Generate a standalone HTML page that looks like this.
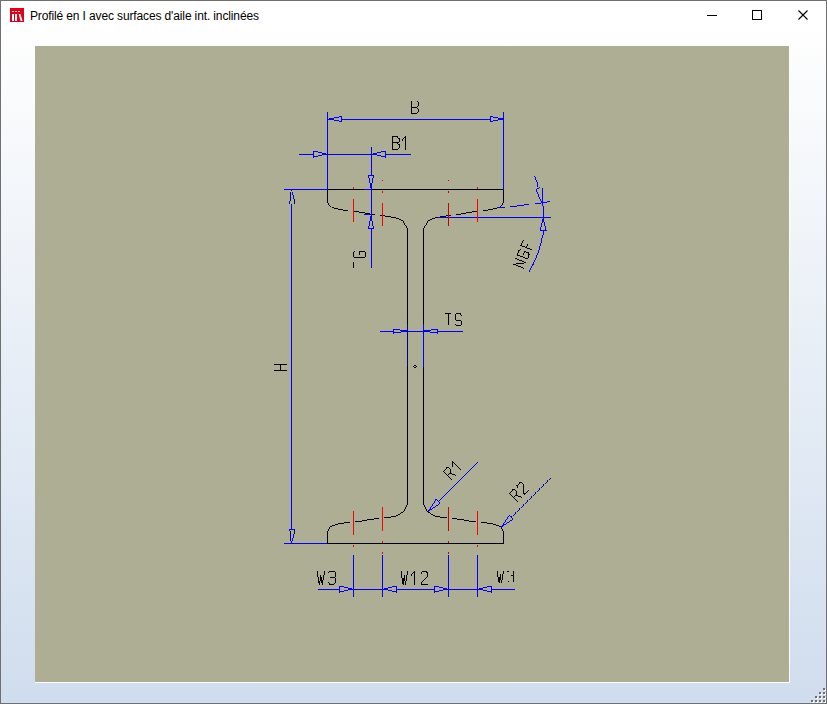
<!DOCTYPE html>
<html><head><meta charset="utf-8">
<style>
html,body{margin:0;padding:0;width:827px;height:704px;overflow:hidden;background:#fff;}
#win{position:absolute;left:0;top:0;width:825px;height:702px;border:1px solid #707070;background:#fff;}
#title{position:absolute;left:0;top:0;width:825px;height:31px;background:#fff;}
#icon{position:absolute;left:9px;top:7px;width:14px;height:14px;}
#icon svg{position:static;display:block;}
#ttext{position:absolute;left:29px;letter-spacing:-0.13px;top:8px;font-family:"Liberation Sans",sans-serif;font-size:12px;color:#000;white-space:nowrap;line-height:15px;}
#client{position:absolute;left:0;top:31px;width:825px;height:671px;background:linear-gradient(#fefefe,#d0ddee);}
#canvas{position:absolute;left:34px;top:14px;width:754px;height:636px;background:#aeae94;border-right:1px solid #fff;border-bottom:1px solid #fff;}
svg{position:absolute;left:0;top:0;}
.g i{position:absolute;width:2px;height:2px;background:#6b6b6b;box-shadow:1px 1px 0 #fff;}

</style></head><body>
<div id="win">
 <div id="title">
  <div id="icon"><svg width="14" height="14" viewBox="0 0 14 14" shape-rendering="crispEdges"><rect width="14" height="14" fill="#df001a"/><rect x="2" y="3" width="2" height="1" fill="#f8c0c8"/><rect x="2" y="6" width="2" height="7" fill="#fff"/><rect x="5" y="3" width="2" height="1" fill="#f8c0c8"/><rect x="5" y="6" width="2" height="7" fill="#fff"/><rect x="8" y="3" width="2" height="1" fill="#f8c0c8"/><g shape-rendering="auto"><polygon points="8.6,6 10.4,6 12.6,13 10.6,13" fill="#fff"/></g><rect x="1.6" y="4" width="0.6" height="2" fill="#f4a0aa"/></svg></div>
  <div id="ttext">Profilé en I avec surfaces d'aile int. inclinées</div>
  <div style="position:absolute;left:706px;top:14px;width:10px;height:1px;background:#000"></div>
  <div style="position:absolute;left:751px;top:9px;width:8px;height:8px;border:1px solid #000"></div>
  <svg style="position:absolute;left:797px;top:9px" width="10" height="10" viewBox="0 0 10 10"><path d="M0.5,0.5L9.5,9.5M9.5,0.5L0.5,9.5" stroke="#000" stroke-width="1.1" fill="none"/></svg>
 </div>
 <div id="client">
  <div id="canvas"></div>
 </div>
 <div class="g"><i style="left:822px;top:687px"></i><i style="left:822px;top:691px"></i><i style="left:818px;top:691px"></i><i style="left:822px;top:695px"></i><i style="left:818px;top:695px"></i><i style="left:814px;top:695px"></i><i style="left:822px;top:699px"></i><i style="left:818px;top:699px"></i><i style="left:814px;top:699px"></i><i style="left:810px;top:699px"></i></div>
</div>
<svg width="827" height="704" viewBox="0 0 827 704" shape-rendering="crispEdges"><path fill="#000000" d="M411 101h1v1h-1zM417 101h1v1h-1zM411 102h1v1h-1zM418 102h1v1h-1zM411 103h1v1h-1zM418 103h1v1h-1zM411 104h1v1h-1zM418 104h1v1h-1zM411 105h1v1h-1zM418 105h1v1h-1zM411 106h1v1h-1zM417 106h1v1h-1zM411 107h6v1h-6zM411 108h1v1h-1zM417 108h1v1h-1zM411 109h1v1h-1zM418 109h1v1h-1zM411 110h1v1h-1zM418 110h1v1h-1zM411 111h1v1h-1zM418 111h1v1h-1zM411 112h1v1h-1zM417 112h1v1h-1zM411 113h6v1h-6zM392 136h6v1h-6zM405 136h1v1h-1zM392 137h1v1h-1zM397 137h1v1h-1zM404 137h2v1h-2zM392 138h1v1h-1zM398 138h2v1h-2zM403 138h1v1h-1zM405 138h1v1h-1zM392 139h1v1h-1zM399 139h1v1h-1zM402 139h1v1h-1zM405 139h1v1h-1zM392 140h1v1h-1zM399 140h1v1h-1zM402 140h1v1h-1zM405 140h1v1h-1zM392 141h1v1h-1zM399 141h1v1h-1zM405 141h1v1h-1zM392 142h7v1h-7zM405 142h1v1h-1zM392 143h1v1h-1zM397 143h1v1h-1zM405 143h1v1h-1zM392 144h1v1h-1zM398 144h2v1h-2zM405 144h1v1h-1zM392 145h1v1h-1zM399 145h1v1h-1zM405 145h1v1h-1zM392 146h1v1h-1zM399 146h1v1h-1zM405 146h1v1h-1zM392 147h1v1h-1zM399 147h1v1h-1zM405 147h1v1h-1zM392 148h1v1h-1zM398 148h1v1h-1zM405 148h1v1h-1zM392 149h6v1h-6zM405 149h1v1h-1zM328 189h36v1h-36zM372 189h131v1h-131zM327 190h1v1h-1zM503 190h1v1h-1zM327 191h1v1h-1zM503 191h1v1h-1zM327 192h1v1h-1zM503 192h1v1h-1zM327 193h1v1h-1zM503 193h1v1h-1zM327 194h1v1h-1zM503 194h1v1h-1zM327 195h1v1h-1zM503 195h1v1h-1zM327 196h1v1h-1zM503 196h1v1h-1zM327 197h1v1h-1zM503 197h1v1h-1zM327 198h1v1h-1zM503 198h1v1h-1zM327 199h1v1h-1zM503 199h1v1h-1zM327 200h1v1h-1zM503 200h1v1h-1zM327 201h1v1h-1zM503 201h1v1h-1zM327 202h1v1h-1zM503 202h1v1h-1zM328 203h1v1h-1zM502 203h1v1h-1zM328 204h1v1h-1zM502 204h1v1h-1zM329 205h1v1h-1zM501 205h1v1h-1zM330 206h1v1h-1zM500 206h1v1h-1zM332 207h2v1h-2zM334 208h4v1h-4zM493 208h4v1h-4zM338 209h5v1h-5zM488 209h5v1h-5zM343 210h5v1h-5zM483 210h5v1h-5zM354 211h5v1h-5zM472 211h5v1h-5zM359 212h6v1h-6zM466 212h6v1h-6zM365 213h5v1h-5zM461 213h5v1h-5zM372 214h3v1h-3zM456 214h5v1h-5zM380 215h2v1h-2zM383 215h2v1h-2zM446 215h2v1h-2zM449 215h2v1h-2zM385 216h6v1h-6zM440 216h6v1h-6zM391 217h5v1h-5zM435 217h3v1h-3zM396 218h3v1h-3zM432 218h3v1h-3zM399 219h2v1h-2zM430 219h2v1h-2zM401 220h2v1h-2zM428 220h2v1h-2zM403 221h1v1h-1zM427 221h1v1h-1zM403 222h1v1h-1zM427 222h1v1h-1zM404 223h1v1h-1zM426 223h1v1h-1zM404 224h1v1h-1zM426 224h1v1h-1zM405 225h1v1h-1zM425 225h1v1h-1zM406 226h1v1h-1zM424 226h1v1h-1zM406 227h1v1h-1zM424 227h1v1h-1zM407 228h1v1h-1zM423 228h1v1h-1zM407 229h1v1h-1zM423 229h1v1h-1zM407 230h1v1h-1zM423 230h1v1h-1zM407 231h1v1h-1zM423 231h1v1h-1zM407 232h1v1h-1zM423 232h1v1h-1zM407 233h1v1h-1zM423 233h1v1h-1zM407 234h1v1h-1zM423 234h1v1h-1zM407 235h1v1h-1zM423 235h1v1h-1zM407 236h1v1h-1zM423 236h1v1h-1zM407 237h1v1h-1zM423 237h1v1h-1zM407 238h1v1h-1zM423 238h1v1h-1zM407 239h1v1h-1zM423 239h1v1h-1zM407 240h1v1h-1zM423 240h1v1h-1zM523 240h1v1h-1zM407 241h1v1h-1zM423 241h1v1h-1zM522 241h1v1h-1zM407 242h1v1h-1zM423 242h1v1h-1zM522 242h1v1h-1zM407 243h1v1h-1zM423 243h1v1h-1zM521 243h1v1h-1zM407 244h1v1h-1zM423 244h1v1h-1zM521 244h1v1h-1zM527 244h1v1h-1zM407 245h1v1h-1zM423 245h1v1h-1zM520 245h2v1h-2zM527 245h1v1h-1zM407 246h1v1h-1zM423 246h1v1h-1zM522 246h3v1h-3zM526 246h1v1h-1zM407 247h1v1h-1zM423 247h1v1h-1zM525 247h2v1h-2zM407 248h1v1h-1zM423 248h1v1h-1zM527 248h3v1h-3zM407 249h1v1h-1zM423 249h1v1h-1zM520 249h1v1h-1zM530 249h2v1h-2zM407 250h1v1h-1zM423 250h1v1h-1zM518 250h2v1h-2zM354 251h1v1h-1zM359 251h6v1h-6zM407 251h1v1h-1zM423 251h1v1h-1zM518 251h1v1h-1zM524 251h2v1h-2zM353 252h1v1h-1zM359 252h1v1h-1zM365 252h1v1h-1zM407 252h1v1h-1zM423 252h1v1h-1zM518 252h1v1h-1zM524 252h1v1h-1zM526 252h3v1h-3zM353 253h1v1h-1zM359 253h1v1h-1zM365 253h1v1h-1zM407 253h1v1h-1zM423 253h1v1h-1zM517 253h1v1h-1zM523 253h1v1h-1zM528 253h1v1h-1zM353 254h1v1h-1zM359 254h1v1h-1zM365 254h1v1h-1zM407 254h1v1h-1zM423 254h1v1h-1zM517 254h1v1h-1zM523 254h1v1h-1zM528 254h2v1h-2zM353 255h1v1h-1zM365 255h1v1h-1zM407 255h1v1h-1zM423 255h1v1h-1zM517 255h3v1h-3zM528 255h1v1h-1zM353 256h1v1h-1zM365 256h1v1h-1zM407 256h1v1h-1zM423 256h1v1h-1zM520 256h3v1h-3zM528 256h1v1h-1zM354 257h11v1h-11zM407 257h1v1h-1zM423 257h1v1h-1zM523 257h2v1h-2zM528 257h1v1h-1zM407 258h1v1h-1zM423 258h1v1h-1zM515 258h2v1h-2zM525 258h3v1h-3zM407 259h1v1h-1zM423 259h1v1h-1zM517 259h2v1h-2zM407 260h1v1h-1zM423 260h1v1h-1zM519 260h3v1h-3zM407 261h1v1h-1zM423 261h1v1h-1zM522 261h2v1h-2zM353 262h1v1h-1zM407 262h1v1h-1zM423 262h1v1h-1zM524 262h2v1h-2zM353 263h1v1h-1zM407 263h1v1h-1zM423 263h1v1h-1zM516 263h8v1h-8zM353 264h1v1h-1zM407 264h1v1h-1zM423 264h1v1h-1zM513 264h3v1h-3zM353 265h1v1h-1zM407 265h1v1h-1zM423 265h1v1h-1zM516 265h2v1h-2zM353 266h1v1h-1zM407 266h1v1h-1zM423 266h1v1h-1zM518 266h3v1h-3zM353 267h1v1h-1zM407 267h1v1h-1zM423 267h1v1h-1zM521 267h2v1h-2zM407 268h1v1h-1zM423 268h1v1h-1zM523 268h1v1h-1zM407 269h1v1h-1zM423 269h1v1h-1zM407 270h1v1h-1zM423 270h1v1h-1zM407 271h1v1h-1zM423 271h1v1h-1zM407 272h1v1h-1zM423 272h1v1h-1zM407 273h1v1h-1zM423 273h1v1h-1zM407 274h1v1h-1zM423 274h1v1h-1zM407 275h1v1h-1zM423 275h1v1h-1zM407 276h1v1h-1zM423 276h1v1h-1zM407 277h1v1h-1zM423 277h1v1h-1zM407 278h1v1h-1zM423 278h1v1h-1zM407 279h1v1h-1zM423 279h1v1h-1zM407 280h1v1h-1zM423 280h1v1h-1zM407 281h1v1h-1zM423 281h1v1h-1zM407 282h1v1h-1zM423 282h1v1h-1zM407 283h1v1h-1zM423 283h1v1h-1zM407 284h1v1h-1zM423 284h1v1h-1zM407 285h1v1h-1zM423 285h1v1h-1zM407 286h1v1h-1zM423 286h1v1h-1zM407 287h1v1h-1zM423 287h1v1h-1zM407 288h1v1h-1zM423 288h1v1h-1zM407 289h1v1h-1zM423 289h1v1h-1zM407 290h1v1h-1zM423 290h1v1h-1zM407 291h1v1h-1zM423 291h1v1h-1zM407 292h1v1h-1zM423 292h1v1h-1zM407 293h1v1h-1zM423 293h1v1h-1zM407 294h1v1h-1zM423 294h1v1h-1zM407 295h1v1h-1zM423 295h1v1h-1zM407 296h1v1h-1zM423 296h1v1h-1zM407 297h1v1h-1zM423 297h1v1h-1zM407 298h1v1h-1zM423 298h1v1h-1zM407 299h1v1h-1zM423 299h1v1h-1zM407 300h1v1h-1zM423 300h1v1h-1zM407 301h1v1h-1zM423 301h1v1h-1zM407 302h1v1h-1zM423 302h1v1h-1zM407 303h1v1h-1zM423 303h1v1h-1zM407 304h1v1h-1zM423 304h1v1h-1zM407 305h1v1h-1zM423 305h1v1h-1zM407 306h1v1h-1zM423 306h1v1h-1zM407 307h1v1h-1zM423 307h1v1h-1zM407 308h1v1h-1zM423 308h1v1h-1zM407 309h1v1h-1zM423 309h1v1h-1zM407 310h1v1h-1zM423 310h1v1h-1zM407 311h1v1h-1zM423 311h1v1h-1zM407 312h1v1h-1zM423 312h1v1h-1zM407 313h1v1h-1zM423 313h1v1h-1zM445 313h6v1h-6zM456 313h5v1h-5zM407 314h1v1h-1zM423 314h1v1h-1zM448 314h1v1h-1zM455 314h1v1h-1zM460 314h1v1h-1zM407 315h1v1h-1zM423 315h1v1h-1zM448 315h1v1h-1zM455 315h1v1h-1zM461 315h1v1h-1zM407 316h1v1h-1zM423 316h1v1h-1zM448 316h1v1h-1zM455 316h1v1h-1zM407 317h1v1h-1zM423 317h1v1h-1zM448 317h1v1h-1zM455 317h1v1h-1zM407 318h1v1h-1zM423 318h1v1h-1zM448 318h1v1h-1zM455 318h1v1h-1zM407 319h1v1h-1zM423 319h1v1h-1zM448 319h1v1h-1zM455 319h1v1h-1zM407 320h1v1h-1zM423 320h1v1h-1zM448 320h1v1h-1zM456 320h5v1h-5zM407 321h1v1h-1zM423 321h1v1h-1zM448 321h1v1h-1zM461 321h1v1h-1zM407 322h1v1h-1zM423 322h1v1h-1zM448 322h1v1h-1zM461 322h1v1h-1zM407 323h1v1h-1zM423 323h1v1h-1zM448 323h1v1h-1zM461 323h1v1h-1zM448 324h1v1h-1zM455 324h1v1h-1zM461 324h1v1h-1zM456 325h5v1h-5zM274 364h13v1h-13zM280 365h1v1h-1zM414 365h2v1h-2zM280 366h1v1h-1zM413 366h1v1h-1zM416 366h1v1h-1zM280 367h1v1h-1zM407 367h1v1h-1zM414 367h2v1h-2zM423 367h1v1h-1zM280 368h1v1h-1zM407 368h1v1h-1zM423 368h1v1h-1zM280 369h1v1h-1zM407 369h1v1h-1zM423 369h1v1h-1zM274 370h13v1h-13zM407 370h1v1h-1zM423 370h1v1h-1zM407 371h1v1h-1zM423 371h1v1h-1zM407 372h1v1h-1zM423 372h1v1h-1zM407 373h1v1h-1zM423 373h1v1h-1zM407 374h1v1h-1zM423 374h1v1h-1zM407 375h1v1h-1zM423 375h1v1h-1zM407 376h1v1h-1zM423 376h1v1h-1zM407 377h1v1h-1zM423 377h1v1h-1zM407 378h1v1h-1zM423 378h1v1h-1zM407 379h1v1h-1zM423 379h1v1h-1zM407 380h1v1h-1zM423 380h1v1h-1zM407 381h1v1h-1zM423 381h1v1h-1zM407 382h1v1h-1zM423 382h1v1h-1zM407 383h1v1h-1zM423 383h1v1h-1zM407 384h1v1h-1zM423 384h1v1h-1zM407 385h1v1h-1zM423 385h1v1h-1zM407 386h1v1h-1zM423 386h1v1h-1zM407 387h1v1h-1zM423 387h1v1h-1zM407 388h1v1h-1zM423 388h1v1h-1zM407 389h1v1h-1zM423 389h1v1h-1zM407 390h1v1h-1zM423 390h1v1h-1zM407 391h1v1h-1zM423 391h1v1h-1zM407 392h1v1h-1zM423 392h1v1h-1zM407 393h1v1h-1zM423 393h1v1h-1zM407 394h1v1h-1zM423 394h1v1h-1zM407 395h1v1h-1zM423 395h1v1h-1zM407 396h1v1h-1zM423 396h1v1h-1zM407 397h1v1h-1zM423 397h1v1h-1zM407 398h1v1h-1zM423 398h1v1h-1zM407 399h1v1h-1zM423 399h1v1h-1zM407 400h1v1h-1zM423 400h1v1h-1zM407 401h1v1h-1zM423 401h1v1h-1zM407 402h1v1h-1zM423 402h1v1h-1zM407 403h1v1h-1zM423 403h1v1h-1zM407 404h1v1h-1zM423 404h1v1h-1zM407 405h1v1h-1zM423 405h1v1h-1zM407 406h1v1h-1zM423 406h1v1h-1zM407 407h1v1h-1zM423 407h1v1h-1zM407 408h1v1h-1zM423 408h1v1h-1zM407 409h1v1h-1zM423 409h1v1h-1zM407 410h1v1h-1zM423 410h1v1h-1zM407 411h1v1h-1zM423 411h1v1h-1zM407 412h1v1h-1zM423 412h1v1h-1zM407 413h1v1h-1zM423 413h1v1h-1zM407 414h1v1h-1zM423 414h1v1h-1zM407 415h1v1h-1zM423 415h1v1h-1zM407 416h1v1h-1zM423 416h1v1h-1zM407 417h1v1h-1zM423 417h1v1h-1zM407 418h1v1h-1zM423 418h1v1h-1zM407 419h1v1h-1zM423 419h1v1h-1zM407 420h1v1h-1zM423 420h1v1h-1zM407 421h1v1h-1zM423 421h1v1h-1zM407 422h1v1h-1zM423 422h1v1h-1zM407 423h1v1h-1zM423 423h1v1h-1zM407 424h1v1h-1zM423 424h1v1h-1zM407 425h1v1h-1zM423 425h1v1h-1zM407 426h1v1h-1zM423 426h1v1h-1zM407 427h1v1h-1zM423 427h1v1h-1zM407 428h1v1h-1zM423 428h1v1h-1zM407 429h1v1h-1zM423 429h1v1h-1zM407 430h1v1h-1zM423 430h1v1h-1zM407 431h1v1h-1zM423 431h1v1h-1zM407 432h1v1h-1zM423 432h1v1h-1zM407 433h1v1h-1zM423 433h1v1h-1zM407 434h1v1h-1zM423 434h1v1h-1zM407 435h1v1h-1zM423 435h1v1h-1zM407 436h1v1h-1zM423 436h1v1h-1zM407 437h1v1h-1zM423 437h1v1h-1zM407 438h1v1h-1zM423 438h1v1h-1zM407 439h1v1h-1zM423 439h1v1h-1zM407 440h1v1h-1zM423 440h1v1h-1zM407 441h1v1h-1zM423 441h1v1h-1zM407 442h1v1h-1zM423 442h1v1h-1zM407 443h1v1h-1zM423 443h1v1h-1zM407 444h1v1h-1zM423 444h1v1h-1zM407 445h1v1h-1zM423 445h1v1h-1zM407 446h1v1h-1zM423 446h1v1h-1zM407 447h1v1h-1zM423 447h1v1h-1zM407 448h1v1h-1zM423 448h1v1h-1zM407 449h1v1h-1zM423 449h1v1h-1zM407 450h1v1h-1zM423 450h1v1h-1zM407 451h1v1h-1zM423 451h1v1h-1zM407 452h1v1h-1zM423 452h1v1h-1zM407 453h1v1h-1zM423 453h1v1h-1zM407 454h1v1h-1zM423 454h1v1h-1zM407 455h1v1h-1zM423 455h1v1h-1zM407 456h1v1h-1zM423 456h1v1h-1zM407 457h1v1h-1zM423 457h1v1h-1zM407 458h1v1h-1zM423 458h1v1h-1zM407 459h1v1h-1zM423 459h1v1h-1zM407 460h1v1h-1zM423 460h1v1h-1zM407 461h1v1h-1zM423 461h1v1h-1zM452 461h1v1h-1zM407 462h1v1h-1zM423 462h1v1h-1zM452 462h2v1h-2zM407 463h1v1h-1zM423 463h1v1h-1zM452 463h1v1h-1zM454 463h1v1h-1zM407 464h1v1h-1zM423 464h1v1h-1zM452 464h1v1h-1zM455 464h1v1h-1zM407 465h1v1h-1zM423 465h1v1h-1zM452 465h1v1h-1zM456 465h1v1h-1zM407 466h1v1h-1zM423 466h1v1h-1zM452 466h1v1h-1zM457 466h1v1h-1zM407 467h1v1h-1zM423 467h1v1h-1zM446 467h3v1h-3zM458 467h1v1h-1zM407 468h1v1h-1zM423 468h1v1h-1zM446 468h1v1h-1zM449 468h1v1h-1zM459 468h1v1h-1zM407 469h1v1h-1zM423 469h1v1h-1zM445 469h1v1h-1zM450 469h1v1h-1zM460 469h1v1h-1zM407 470h1v1h-1zM423 470h1v1h-1zM444 470h1v1h-1zM450 470h1v1h-1zM407 471h1v1h-1zM423 471h1v1h-1zM443 471h1v1h-1zM450 471h1v1h-1zM407 472h1v1h-1zM423 472h1v1h-1zM444 472h1v1h-1zM450 472h1v1h-1zM407 473h1v1h-1zM423 473h1v1h-1zM445 473h1v1h-1zM449 473h3v1h-3zM407 474h1v1h-1zM423 474h1v1h-1zM446 474h1v1h-1zM448 474h1v1h-1zM452 474h3v1h-3zM407 475h1v1h-1zM423 475h1v1h-1zM447 475h1v1h-1zM455 475h1v1h-1zM407 476h1v1h-1zM423 476h1v1h-1zM448 476h1v1h-1zM407 477h1v1h-1zM423 477h1v1h-1zM449 477h1v1h-1zM407 478h1v1h-1zM423 478h1v1h-1zM450 478h1v1h-1zM407 479h1v1h-1zM423 479h1v1h-1zM451 479h1v1h-1zM407 480h1v1h-1zM423 480h1v1h-1zM407 481h1v1h-1zM423 481h1v1h-1zM407 482h1v1h-1zM423 482h1v1h-1zM519 482h3v1h-3zM407 483h1v1h-1zM423 483h1v1h-1zM519 483h1v1h-1zM522 483h1v1h-1zM407 484h1v1h-1zM423 484h1v1h-1zM518 484h1v1h-1zM523 484h1v1h-1zM407 485h1v1h-1zM423 485h1v1h-1zM516 485h2v1h-2zM523 485h1v1h-1zM407 486h1v1h-1zM423 486h1v1h-1zM517 486h1v1h-1zM523 486h1v1h-1zM407 487h1v1h-1zM423 487h1v1h-1zM517 487h1v1h-1zM523 487h1v1h-1zM407 488h1v1h-1zM423 488h1v1h-1zM523 488h1v1h-1zM407 489h1v1h-1zM423 489h1v1h-1zM512 489h3v1h-3zM523 489h1v1h-1zM407 490h1v1h-1zM423 490h1v1h-1zM512 490h1v1h-1zM515 490h1v1h-1zM523 490h1v1h-1zM528 490h1v1h-1zM407 491h1v1h-1zM423 491h1v1h-1zM511 491h1v1h-1zM516 491h1v1h-1zM523 491h1v1h-1zM527 491h1v1h-1zM407 492h1v1h-1zM423 492h1v1h-1zM510 492h1v1h-1zM516 492h1v1h-1zM523 492h1v1h-1zM526 492h1v1h-1zM407 493h1v1h-1zM423 493h1v1h-1zM509 493h1v1h-1zM516 493h1v1h-1zM523 493h3v1h-3zM407 494h1v1h-1zM423 494h1v1h-1zM510 494h1v1h-1zM516 494h1v1h-1zM524 494h1v1h-1zM407 495h1v1h-1zM423 495h1v1h-1zM511 495h1v1h-1zM515 495h3v1h-3zM407 496h1v1h-1zM423 496h1v1h-1zM512 496h1v1h-1zM514 496h1v1h-1zM518 496h3v1h-3zM407 497h1v1h-1zM423 497h1v1h-1zM513 497h1v1h-1zM521 497h1v1h-1zM407 498h1v1h-1zM423 498h1v1h-1zM514 498h1v1h-1zM407 499h1v1h-1zM423 499h1v1h-1zM515 499h1v1h-1zM407 500h1v1h-1zM423 500h1v1h-1zM516 500h1v1h-1zM407 501h1v1h-1zM423 501h1v1h-1zM517 501h1v1h-1zM407 502h1v1h-1zM423 502h1v1h-1zM407 503h1v1h-1zM423 503h1v1h-1zM407 504h1v1h-1zM423 504h1v1h-1zM406 505h1v1h-1zM424 505h1v1h-1zM406 506h1v1h-1zM424 506h1v1h-1zM405 507h1v1h-1zM425 507h1v1h-1zM405 508h1v1h-1zM425 508h1v1h-1zM404 509h1v1h-1zM426 509h1v1h-1zM404 510h1v1h-1zM426 510h1v1h-1zM403 511h1v1h-1zM427 511h1v1h-1zM401 512h2v1h-2zM428 512h2v1h-2zM400 513h1v1h-1zM430 513h1v1h-1zM398 514h2v1h-2zM431 514h2v1h-2zM396 515h2v1h-2zM433 515h2v1h-2zM391 516h5v1h-5zM435 516h5v1h-5zM384 517h7v1h-7zM440 517h7v1h-7zM374 518h5v1h-5zM452 518h5v1h-5zM367 519h7v1h-7zM457 519h7v1h-7zM362 520h5v1h-5zM464 520h5v1h-5zM355 521h7v1h-7zM469 521h7v1h-7zM344 522h6v1h-6zM481 522h6v1h-6zM338 523h6v1h-6zM487 523h6v1h-6zM335 524h3v1h-3zM493 524h3v1h-3zM332 525h3v1h-3zM496 525h3v1h-3zM330 526h2v1h-2zM499 526h2v1h-2zM329 527h1v1h-1zM329 528h1v1h-1zM501 528h1v1h-1zM328 529h1v1h-1zM502 529h1v1h-1zM328 530h1v1h-1zM502 530h1v1h-1zM327 531h1v1h-1zM503 531h1v1h-1zM327 532h1v1h-1zM503 532h1v1h-1zM327 533h1v1h-1zM503 533h1v1h-1zM327 534h1v1h-1zM503 534h1v1h-1zM327 535h1v1h-1zM503 535h1v1h-1zM327 536h1v1h-1zM503 536h1v1h-1zM327 537h1v1h-1zM503 537h1v1h-1zM327 538h1v1h-1zM503 538h1v1h-1zM327 539h1v1h-1zM503 539h1v1h-1zM327 540h1v1h-1zM503 540h1v1h-1zM327 541h1v1h-1zM503 541h1v1h-1zM327 542h1v1h-1zM503 542h1v1h-1zM327 543h177v1h-177zM317 571h1v1h-1zM324 571h1v1h-1zM329 571h6v1h-6zM401 571h1v1h-1zM407 571h1v1h-1zM414 571h1v1h-1zM422 571h5v1h-5zM497 571h1v1h-1zM503 571h1v1h-1zM507 571h2v1h-2zM513 571h1v1h-1zM317 572h1v1h-1zM324 572h1v1h-1zM328 572h1v1h-1zM335 572h1v1h-1zM401 572h1v1h-1zM407 572h1v1h-1zM413 572h2v1h-2zM421 572h1v1h-1zM426 572h2v1h-2zM497 572h1v1h-1zM503 572h1v1h-1zM513 572h1v1h-1zM317 573h1v1h-1zM324 573h1v1h-1zM335 573h1v1h-1zM401 573h1v1h-1zM407 573h1v1h-1zM412 573h1v1h-1zM414 573h1v1h-1zM421 573h1v1h-1zM427 573h1v1h-1zM497 573h1v1h-1zM503 573h1v1h-1zM513 573h1v1h-1zM317 574h1v1h-1zM324 574h1v1h-1zM335 574h1v1h-1zM401 574h1v1h-1zM407 574h1v1h-1zM411 574h1v1h-1zM414 574h1v1h-1zM427 574h1v1h-1zM497 574h1v1h-1zM500 574h1v1h-1zM502 574h1v1h-1zM513 574h1v1h-1zM317 575h1v1h-1zM320 575h1v1h-1zM323 575h1v1h-1zM335 575h1v1h-1zM401 575h1v1h-1zM404 575h1v1h-1zM406 575h1v1h-1zM411 575h1v1h-1zM414 575h1v1h-1zM427 575h1v1h-1zM497 575h1v1h-1zM500 575h1v1h-1zM502 575h1v1h-1zM511 575h3v1h-3zM317 576h1v1h-1zM320 576h1v1h-1zM323 576h1v1h-1zM335 576h1v1h-1zM401 576h1v1h-1zM404 576h1v1h-1zM406 576h1v1h-1zM414 576h1v1h-1zM427 576h1v1h-1zM497 576h1v1h-1zM500 576h1v1h-1zM502 576h1v1h-1zM513 576h1v1h-1zM318 577h1v1h-1zM320 577h2v1h-2zM323 577h1v1h-1zM330 577h5v1h-5zM401 577h1v1h-1zM404 577h1v1h-1zM406 577h1v1h-1zM414 577h1v1h-1zM426 577h1v1h-1zM498 577h3v1h-3zM502 577h1v1h-1zM513 577h1v1h-1zM318 578h1v1h-1zM320 578h2v1h-2zM323 578h1v1h-1zM335 578h1v1h-1zM402 578h3v1h-3zM406 578h1v1h-1zM414 578h1v1h-1zM425 578h1v1h-1zM498 578h3v1h-3zM502 578h1v1h-1zM513 578h1v1h-1zM318 579h1v1h-1zM320 579h2v1h-2zM323 579h1v1h-1zM335 579h1v1h-1zM402 579h3v1h-3zM406 579h1v1h-1zM414 579h1v1h-1zM424 579h1v1h-1zM498 579h3v1h-3zM502 579h1v1h-1zM513 579h1v1h-1zM318 580h1v1h-1zM320 580h3v1h-3zM335 580h1v1h-1zM402 580h3v1h-3zM406 580h1v1h-1zM414 580h1v1h-1zM423 580h1v1h-1zM498 580h2v1h-2zM501 580h1v1h-1zM513 580h1v1h-1zM318 581h2v1h-2zM321 581h2v1h-2zM335 581h1v1h-1zM402 581h2v1h-2zM405 581h1v1h-1zM414 581h1v1h-1zM422 581h1v1h-1zM498 581h2v1h-2zM501 581h1v1h-1zM508 581h1v1h-1zM513 581h1v1h-1zM318 582h2v1h-2zM321 582h2v1h-2zM328 582h1v1h-1zM335 582h1v1h-1zM402 582h2v1h-2zM405 582h1v1h-1zM414 582h1v1h-1zM421 582h1v1h-1zM499 582h1v1h-1zM501 582h1v1h-1zM319 583h1v1h-1zM322 583h1v1h-1zM329 583h1v1h-1zM334 583h1v1h-1zM402 583h2v1h-2zM405 583h1v1h-1zM414 583h1v1h-1zM421 583h1v1h-1zM319 584h1v1h-1zM322 584h1v1h-1zM329 584h5v1h-5zM403 584h1v1h-1zM405 584h1v1h-1zM414 584h1v1h-1zM421 584h7v1h-7z"/><path fill="#0000ff" d="M327 112h1v1h-1zM503 112h1v1h-1zM327 113h1v1h-1zM503 113h1v1h-1zM327 114h1v1h-1zM503 114h1v1h-1zM327 115h1v1h-1zM503 115h1v1h-1zM327 116h1v1h-1zM339 116h3v1h-3zM490 116h3v1h-3zM503 116h1v1h-1zM327 117h1v1h-1zM334 117h5v1h-5zM341 117h1v1h-1zM490 117h1v1h-1zM493 117h5v1h-5zM503 117h1v1h-1zM327 118h1v1h-1zM329 118h5v1h-5zM341 118h1v1h-1zM490 118h1v1h-1zM498 118h6v1h-6zM327 119h7v1h-7zM341 119h150v1h-150zM498 119h6v1h-6zM327 120h1v1h-1zM334 120h5v1h-5zM341 120h1v1h-1zM490 120h1v1h-1zM493 120h5v1h-5zM503 120h1v1h-1zM327 121h1v1h-1zM339 121h3v1h-3zM490 121h3v1h-3zM503 121h1v1h-1zM327 122h1v1h-1zM503 122h1v1h-1zM327 123h1v1h-1zM503 123h1v1h-1zM327 124h1v1h-1zM503 124h1v1h-1zM327 125h1v1h-1zM503 125h1v1h-1zM327 126h1v1h-1zM503 126h1v1h-1zM327 127h1v1h-1zM503 127h1v1h-1zM327 128h1v1h-1zM503 128h1v1h-1zM327 129h1v1h-1zM503 129h1v1h-1zM327 130h1v1h-1zM503 130h1v1h-1zM327 131h1v1h-1zM503 131h1v1h-1zM327 132h1v1h-1zM503 132h1v1h-1zM327 133h1v1h-1zM503 133h1v1h-1zM327 134h1v1h-1zM503 134h1v1h-1zM327 135h1v1h-1zM503 135h1v1h-1zM327 136h1v1h-1zM503 136h1v1h-1zM327 137h1v1h-1zM503 137h1v1h-1zM327 138h1v1h-1zM503 138h1v1h-1zM327 139h1v1h-1zM503 139h1v1h-1zM327 140h1v1h-1zM503 140h1v1h-1zM327 141h1v1h-1zM503 141h1v1h-1zM327 142h1v1h-1zM503 142h1v1h-1zM327 143h1v1h-1zM503 143h1v1h-1zM327 144h1v1h-1zM503 144h1v1h-1zM327 145h1v1h-1zM503 145h1v1h-1zM327 146h1v1h-1zM503 146h1v1h-1zM327 147h1v1h-1zM371 147h1v1h-1zM503 147h1v1h-1zM327 148h1v1h-1zM371 148h1v1h-1zM503 148h1v1h-1zM327 149h1v1h-1zM371 149h1v1h-1zM503 149h1v1h-1zM327 150h1v1h-1zM371 150h1v1h-1zM503 150h1v1h-1zM313 151h5v1h-5zM327 151h1v1h-1zM371 151h1v1h-1zM381 151h5v1h-5zM503 151h1v1h-1zM313 152h1v1h-1zM318 152h4v1h-4zM327 152h1v1h-1zM371 152h1v1h-1zM377 152h4v1h-4zM385 152h1v1h-1zM503 152h1v1h-1zM313 153h1v1h-1zM322 153h4v1h-4zM327 153h1v1h-1zM371 153h1v1h-1zM373 153h4v1h-4zM385 153h1v1h-1zM503 153h1v1h-1zM299 154h15v1h-15zM322 154h55v1h-55zM385 154h26v1h-26zM503 154h1v1h-1zM313 155h1v1h-1zM318 155h4v1h-4zM327 155h1v1h-1zM371 155h1v1h-1zM377 155h4v1h-4zM385 155h1v1h-1zM503 155h1v1h-1zM313 156h5v1h-5zM327 156h1v1h-1zM371 156h1v1h-1zM381 156h5v1h-5zM503 156h1v1h-1zM313 157h1v1h-1zM327 157h1v1h-1zM371 157h1v1h-1zM385 157h1v1h-1zM503 157h1v1h-1zM327 158h1v1h-1zM371 158h1v1h-1zM503 158h1v1h-1zM327 159h1v1h-1zM371 159h1v1h-1zM503 159h1v1h-1zM327 160h1v1h-1zM371 160h1v1h-1zM503 160h1v1h-1zM327 161h1v1h-1zM371 161h1v1h-1zM503 161h1v1h-1zM327 162h1v1h-1zM371 162h1v1h-1zM503 162h1v1h-1zM327 163h1v1h-1zM371 163h1v1h-1zM503 163h1v1h-1zM327 164h1v1h-1zM371 164h1v1h-1zM503 164h1v1h-1zM327 165h1v1h-1zM371 165h1v1h-1zM503 165h1v1h-1zM327 166h1v1h-1zM371 166h1v1h-1zM503 166h1v1h-1zM327 167h1v1h-1zM371 167h1v1h-1zM503 167h1v1h-1zM327 168h1v1h-1zM371 168h1v1h-1zM503 168h1v1h-1zM327 169h1v1h-1zM371 169h1v1h-1zM503 169h1v1h-1zM327 170h1v1h-1zM371 170h1v1h-1zM503 170h1v1h-1zM327 171h1v1h-1zM371 171h1v1h-1zM503 171h1v1h-1zM327 172h1v1h-1zM371 172h1v1h-1zM503 172h1v1h-1zM327 173h1v1h-1zM371 173h1v1h-1zM503 173h1v1h-1zM327 174h1v1h-1zM371 174h1v1h-1zM503 174h1v1h-1zM327 175h1v1h-1zM368 175h6v1h-6zM503 175h1v1h-1zM327 176h1v1h-1zM368 176h1v1h-1zM373 176h1v1h-1zM503 176h1v1h-1zM534 176h1v1h-1zM327 177h1v1h-1zM368 177h1v1h-1zM373 177h1v1h-1zM503 177h1v1h-1zM535 177h1v1h-1zM327 178h1v1h-1zM369 178h1v1h-1zM372 178h1v1h-1zM503 178h1v1h-1zM535 178h1v1h-1zM327 179h1v1h-1zM369 179h1v1h-1zM372 179h1v1h-1zM503 179h1v1h-1zM535 179h1v1h-1zM327 180h1v1h-1zM369 180h1v1h-1zM372 180h1v1h-1zM503 180h1v1h-1zM536 180h1v1h-1zM327 181h1v1h-1zM369 181h1v1h-1zM372 181h1v1h-1zM503 181h1v1h-1zM536 181h1v1h-1zM327 182h1v1h-1zM369 182h1v1h-1zM372 182h1v1h-1zM503 182h1v1h-1zM537 182h1v1h-1zM327 183h1v1h-1zM370 183h2v1h-2zM503 183h1v1h-1zM537 183h1v1h-1zM327 184h1v1h-1zM370 184h2v1h-2zM503 184h1v1h-1zM537 184h1v1h-1zM327 185h1v1h-1zM370 185h2v1h-2zM503 185h1v1h-1zM537 185h1v1h-1zM327 186h1v1h-1zM370 186h2v1h-2zM503 186h1v1h-1zM537 186h1v1h-1zM327 187h1v1h-1zM370 187h2v1h-2zM503 187h1v1h-1zM539 187h1v1h-1zM327 188h1v1h-1zM371 188h1v1h-1zM503 188h1v1h-1zM537 188h2v1h-2zM542 188h1v1h-1zM284 189h44v1h-44zM364 189h8v1h-8zM503 189h1v1h-1zM536 189h1v1h-1zM542 189h1v1h-1zM291 190h1v1h-1zM371 190h1v1h-1zM536 190h1v1h-1zM542 190h1v1h-1zM371 191h1v1h-1zM536 191h1v1h-1zM542 191h1v1h-1zM292 192h1v1h-1zM371 192h1v1h-1zM537 192h1v1h-1zM542 192h1v1h-1zM292 193h1v1h-1zM371 193h1v1h-1zM537 193h1v1h-1zM542 193h1v1h-1zM292 194h1v1h-1zM371 194h1v1h-1zM538 194h1v1h-1zM542 194h1v1h-1zM293 195h1v1h-1zM371 195h1v1h-1zM538 195h1v1h-1zM542 195h1v1h-1zM293 196h1v1h-1zM371 196h1v1h-1zM538 196h1v1h-1zM542 196h1v1h-1zM293 197h1v1h-1zM371 197h1v1h-1zM539 197h1v1h-1zM542 197h1v1h-1zM293 198h1v1h-1zM371 198h1v1h-1zM539 198h1v1h-1zM542 198h1v1h-1zM371 199h1v1h-1zM540 199h1v1h-1zM542 199h1v1h-1zM371 200h1v1h-1zM540 200h1v1h-1zM542 200h1v1h-1zM289 201h1v1h-1zM371 201h1v1h-1zM541 201h2v1h-2zM547 201h3v1h-3zM289 202h1v1h-1zM371 202h1v1h-1zM541 202h6v1h-6zM289 203h1v1h-1zM371 203h1v1h-1zM535 203h6v1h-6zM542 203h1v1h-1zM291 204h1v1h-1zM371 204h1v1h-1zM524 204h5v1h-5zM542 204h1v1h-1zM291 205h1v1h-1zM371 205h1v1h-1zM517 205h7v1h-7zM542 205h1v1h-1zM291 206h1v1h-1zM371 206h1v1h-1zM510 206h7v1h-7zM543 206h1v1h-1zM291 207h1v1h-1zM371 207h1v1h-1zM497 207h8v1h-8zM543 207h1v1h-1zM291 208h1v1h-1zM371 208h1v1h-1zM543 208h1v1h-1zM291 209h1v1h-1zM371 209h1v1h-1zM543 209h1v1h-1zM291 210h1v1h-1zM371 210h1v1h-1zM543 210h1v1h-1zM291 211h1v1h-1zM371 211h1v1h-1zM543 211h1v1h-1zM291 212h1v1h-1zM371 212h1v1h-1zM543 212h1v1h-1zM291 213h1v1h-1zM371 213h1v1h-1zM543 213h1v1h-1zM291 214h1v1h-1zM364 214h8v1h-8zM543 214h1v1h-1zM291 215h1v1h-1zM371 215h1v1h-1zM543 215h1v1h-1zM291 216h1v1h-1zM370 216h2v1h-2zM543 216h1v1h-1zM291 217h1v1h-1zM370 217h2v1h-2zM438 217h10v1h-10zM449 217h28v1h-28zM478 217h73v1h-73zM291 218h1v1h-1zM370 218h2v1h-2zM543 218h1v1h-1zM291 219h1v1h-1zM370 219h2v1h-2zM542 219h2v1h-2zM291 220h1v1h-1zM370 220h2v1h-2zM542 220h2v1h-2zM291 221h1v1h-1zM369 221h1v1h-1zM372 221h1v1h-1zM542 221h2v1h-2zM291 222h1v1h-1zM369 222h1v1h-1zM372 222h1v1h-1zM542 222h1v1h-1zM544 222h1v1h-1zM291 223h1v1h-1zM369 223h1v1h-1zM372 223h1v1h-1zM541 223h1v1h-1zM544 223h1v1h-1zM291 224h1v1h-1zM369 224h1v1h-1zM372 224h1v1h-1zM541 224h1v1h-1zM544 224h1v1h-1zM291 225h1v1h-1zM369 225h1v1h-1zM372 225h1v1h-1zM541 225h1v1h-1zM544 225h1v1h-1zM291 226h1v1h-1zM368 226h1v1h-1zM373 226h1v1h-1zM541 226h1v1h-1zM545 226h1v1h-1zM291 227h1v1h-1zM368 227h1v1h-1zM373 227h1v1h-1zM540 227h1v1h-1zM545 227h1v1h-1zM291 228h1v1h-1zM368 228h6v1h-6zM540 228h1v1h-1zM545 228h1v1h-1zM291 229h1v1h-1zM371 229h1v1h-1zM540 229h1v1h-1zM545 229h1v1h-1zM291 230h1v1h-1zM371 230h1v1h-1zM540 230h7v1h-7zM291 231h1v1h-1zM371 231h1v1h-1zM543 231h1v1h-1zM291 232h1v1h-1zM371 232h1v1h-1zM543 232h1v1h-1zM291 233h1v1h-1zM371 233h1v1h-1zM543 233h1v1h-1zM291 234h1v1h-1zM371 234h1v1h-1zM543 234h1v1h-1zM291 235h1v1h-1zM371 235h1v1h-1zM542 235h1v1h-1zM291 236h1v1h-1zM371 236h1v1h-1zM542 236h1v1h-1zM291 237h1v1h-1zM371 237h1v1h-1zM542 237h1v1h-1zM291 238h1v1h-1zM371 238h1v1h-1zM541 238h1v1h-1zM291 239h1v1h-1zM371 239h1v1h-1zM541 239h1v1h-1zM291 240h1v1h-1zM371 240h1v1h-1zM541 240h1v1h-1zM291 241h1v1h-1zM371 241h1v1h-1zM541 241h1v1h-1zM291 242h1v1h-1zM371 242h1v1h-1zM541 242h1v1h-1zM291 243h1v1h-1zM371 243h1v1h-1zM540 243h1v1h-1zM291 244h1v1h-1zM371 244h1v1h-1zM540 244h1v1h-1zM291 245h1v1h-1zM371 245h1v1h-1zM540 245h1v1h-1zM291 246h1v1h-1zM371 246h1v1h-1zM539 246h1v1h-1zM291 247h1v1h-1zM371 247h1v1h-1zM539 247h1v1h-1zM291 248h1v1h-1zM371 248h1v1h-1zM539 248h1v1h-1zM291 249h1v1h-1zM371 249h1v1h-1zM539 249h1v1h-1zM291 250h1v1h-1zM371 250h1v1h-1zM538 250h1v1h-1zM291 251h1v1h-1zM371 251h1v1h-1zM538 251h1v1h-1zM291 252h1v1h-1zM371 252h1v1h-1zM538 252h1v1h-1zM291 253h1v1h-1zM371 253h1v1h-1zM537 253h1v1h-1zM291 254h1v1h-1zM371 254h1v1h-1zM537 254h1v1h-1zM291 255h1v1h-1zM371 255h1v1h-1zM536 255h1v1h-1zM291 256h1v1h-1zM371 256h1v1h-1zM536 256h1v1h-1zM291 257h1v1h-1zM371 257h1v1h-1zM536 257h1v1h-1zM291 258h1v1h-1zM371 258h1v1h-1zM535 258h1v1h-1zM291 259h1v1h-1zM371 259h1v1h-1zM535 259h1v1h-1zM291 260h1v1h-1zM371 260h1v1h-1zM534 260h1v1h-1zM291 261h1v1h-1zM371 261h1v1h-1zM534 261h1v1h-1zM291 262h1v1h-1zM371 262h1v1h-1zM533 262h1v1h-1zM291 263h1v1h-1zM371 263h1v1h-1zM533 263h1v1h-1zM291 264h1v1h-1zM371 264h1v1h-1zM532 264h2v1h-2zM291 265h1v1h-1zM371 265h1v1h-1zM532 265h1v1h-1zM291 266h1v1h-1zM371 266h1v1h-1zM531 266h1v1h-1zM291 267h1v1h-1zM371 267h1v1h-1zM531 267h1v1h-1zM291 268h1v1h-1zM530 268h1v1h-1zM291 269h1v1h-1zM530 269h1v1h-1zM291 270h1v1h-1zM529 270h1v1h-1zM291 271h1v1h-1zM529 271h1v1h-1zM291 272h1v1h-1zM291 273h1v1h-1zM291 274h1v1h-1zM291 275h1v1h-1zM291 276h1v1h-1zM291 277h1v1h-1zM291 278h1v1h-1zM291 279h1v1h-1zM291 280h1v1h-1zM291 281h1v1h-1zM291 282h1v1h-1zM291 283h1v1h-1zM291 284h1v1h-1zM291 285h1v1h-1zM291 286h1v1h-1zM291 287h1v1h-1zM291 288h1v1h-1zM291 289h1v1h-1zM291 290h1v1h-1zM291 291h1v1h-1zM291 292h1v1h-1zM291 293h1v1h-1zM291 294h1v1h-1zM291 295h1v1h-1zM291 296h1v1h-1zM291 297h1v1h-1zM291 298h1v1h-1zM291 299h1v1h-1zM291 300h1v1h-1zM291 301h1v1h-1zM291 302h1v1h-1zM291 303h1v1h-1zM291 304h1v1h-1zM291 305h1v1h-1zM291 306h1v1h-1zM291 307h1v1h-1zM291 308h1v1h-1zM291 309h1v1h-1zM291 310h1v1h-1zM291 311h1v1h-1zM291 312h1v1h-1zM291 313h1v1h-1zM291 314h1v1h-1zM291 315h1v1h-1zM291 316h1v1h-1zM291 317h1v1h-1zM291 318h1v1h-1zM291 319h1v1h-1zM291 320h1v1h-1zM291 321h1v1h-1zM291 322h1v1h-1zM291 323h1v1h-1zM291 324h1v1h-1zM423 324h1v1h-1zM291 325h1v1h-1zM423 325h1v1h-1zM291 326h1v1h-1zM423 326h1v1h-1zM291 327h1v1h-1zM423 327h1v1h-1zM291 328h1v1h-1zM423 328h1v1h-1zM291 329h1v1h-1zM393 329h7v1h-7zM423 329h1v1h-1zM431 329h7v1h-7zM291 330h1v1h-1zM393 330h1v1h-1zM400 330h7v1h-7zM423 330h8v1h-8zM437 330h1v1h-1zM291 331h1v1h-1zM380 331h14v1h-14zM401 331h29v1h-29zM437 331h26v1h-26zM291 332h1v1h-1zM393 332h8v1h-8zM423 332h1v1h-1zM430 332h8v1h-8zM291 333h1v1h-1zM393 333h1v1h-1zM423 333h1v1h-1zM437 333h1v1h-1zM291 334h1v1h-1zM423 334h1v1h-1zM291 335h1v1h-1zM423 335h1v1h-1zM291 336h1v1h-1zM423 336h1v1h-1zM291 337h1v1h-1zM423 337h1v1h-1zM291 338h1v1h-1zM423 338h1v1h-1zM291 339h1v1h-1zM423 339h1v1h-1zM291 340h1v1h-1zM423 340h1v1h-1zM291 341h1v1h-1zM423 341h1v1h-1zM291 342h1v1h-1zM423 342h1v1h-1zM291 343h1v1h-1zM423 343h1v1h-1zM291 344h1v1h-1zM423 344h1v1h-1zM291 345h1v1h-1zM423 345h1v1h-1zM291 346h1v1h-1zM423 346h1v1h-1zM291 347h1v1h-1zM423 347h1v1h-1zM291 348h1v1h-1zM423 348h1v1h-1zM291 349h1v1h-1zM423 349h1v1h-1zM291 350h1v1h-1zM423 350h1v1h-1zM291 351h1v1h-1zM423 351h1v1h-1zM291 352h1v1h-1zM423 352h1v1h-1zM291 353h1v1h-1zM423 353h1v1h-1zM291 354h1v1h-1zM423 354h1v1h-1zM291 355h1v1h-1zM423 355h1v1h-1zM291 356h1v1h-1zM423 356h1v1h-1zM291 357h1v1h-1zM423 357h1v1h-1zM291 358h1v1h-1zM423 358h1v1h-1zM291 359h1v1h-1zM423 359h1v1h-1zM291 360h1v1h-1zM423 360h1v1h-1zM291 361h1v1h-1zM423 361h1v1h-1zM291 362h1v1h-1zM423 362h1v1h-1zM291 363h1v1h-1zM423 363h1v1h-1zM291 364h1v1h-1zM423 364h1v1h-1zM291 365h1v1h-1zM423 365h1v1h-1zM291 366h1v1h-1zM423 366h1v1h-1zM291 367h1v1h-1zM291 368h1v1h-1zM291 369h1v1h-1zM291 370h1v1h-1zM291 371h1v1h-1zM291 372h1v1h-1zM291 373h1v1h-1zM291 374h1v1h-1zM291 375h1v1h-1zM291 376h1v1h-1zM291 377h1v1h-1zM291 378h1v1h-1zM291 379h1v1h-1zM291 380h1v1h-1zM291 381h1v1h-1zM291 382h1v1h-1zM291 383h1v1h-1zM291 384h1v1h-1zM291 385h1v1h-1zM291 386h1v1h-1zM291 387h1v1h-1zM291 388h1v1h-1zM291 389h1v1h-1zM291 390h1v1h-1zM291 391h1v1h-1zM291 392h1v1h-1zM291 393h1v1h-1zM291 394h1v1h-1zM291 395h1v1h-1zM291 396h1v1h-1zM291 397h1v1h-1zM291 398h1v1h-1zM291 399h1v1h-1zM291 400h1v1h-1zM291 401h1v1h-1zM291 402h1v1h-1zM291 403h1v1h-1zM291 404h1v1h-1zM291 405h1v1h-1zM291 406h1v1h-1zM291 407h1v1h-1zM291 408h1v1h-1zM291 409h1v1h-1zM291 410h1v1h-1zM291 411h1v1h-1zM291 412h1v1h-1zM291 413h1v1h-1zM291 414h1v1h-1zM291 415h1v1h-1zM291 416h1v1h-1zM291 417h1v1h-1zM291 418h1v1h-1zM291 419h1v1h-1zM291 420h1v1h-1zM291 421h1v1h-1zM291 422h1v1h-1zM291 423h1v1h-1zM291 424h1v1h-1zM291 425h1v1h-1zM291 426h1v1h-1zM291 427h1v1h-1zM291 428h1v1h-1zM291 429h1v1h-1zM291 430h1v1h-1zM291 431h1v1h-1zM291 432h1v1h-1zM291 433h1v1h-1zM291 434h1v1h-1zM291 435h1v1h-1zM291 436h1v1h-1zM291 437h1v1h-1zM291 438h1v1h-1zM291 439h1v1h-1zM291 440h1v1h-1zM291 441h1v1h-1zM291 442h1v1h-1zM291 443h1v1h-1zM291 444h1v1h-1zM291 445h1v1h-1zM291 446h1v1h-1zM291 447h1v1h-1zM291 448h1v1h-1zM291 449h1v1h-1zM291 450h1v1h-1zM291 451h1v1h-1zM291 452h1v1h-1zM291 453h1v1h-1zM291 454h1v1h-1zM291 455h1v1h-1zM291 456h1v1h-1zM291 457h1v1h-1zM291 458h1v1h-1zM291 459h1v1h-1zM291 460h1v1h-1zM291 461h1v1h-1zM291 462h1v1h-1zM477 462h1v1h-1zM291 463h1v1h-1zM476 463h1v1h-1zM291 464h1v1h-1zM475 464h1v1h-1zM291 465h1v1h-1zM474 465h1v1h-1zM291 466h1v1h-1zM473 466h1v1h-1zM291 467h1v1h-1zM472 467h1v1h-1zM291 468h1v1h-1zM471 468h1v1h-1zM291 469h1v1h-1zM470 469h1v1h-1zM291 470h1v1h-1zM469 470h1v1h-1zM291 471h1v1h-1zM468 471h1v1h-1zM291 472h1v1h-1zM467 472h1v1h-1zM291 473h1v1h-1zM466 473h1v1h-1zM291 474h1v1h-1zM465 474h1v1h-1zM291 475h1v1h-1zM464 475h1v1h-1zM291 476h1v1h-1zM463 476h1v1h-1zM291 477h1v1h-1zM462 477h1v1h-1zM291 478h1v1h-1zM461 478h1v1h-1zM291 479h1v1h-1zM460 479h1v1h-1zM549 479h1v1h-1zM291 480h1v1h-1zM459 480h1v1h-1zM291 481h1v1h-1zM458 481h1v1h-1zM291 482h1v1h-1zM457 482h1v1h-1zM546 482h1v1h-1zM291 483h1v1h-1zM456 483h1v1h-1zM545 483h1v1h-1zM291 484h1v1h-1zM455 484h1v1h-1zM291 485h1v1h-1zM454 485h1v1h-1zM291 486h1v1h-1zM453 486h1v1h-1zM542 486h1v1h-1zM291 487h1v1h-1zM452 487h1v1h-1zM541 487h1v1h-1zM291 488h1v1h-1zM451 488h1v1h-1zM291 489h1v1h-1zM450 489h1v1h-1zM291 490h1v1h-1zM449 490h1v1h-1zM538 490h1v1h-1zM291 491h1v1h-1zM448 491h1v1h-1zM537 491h1v1h-1zM291 492h1v1h-1zM447 492h1v1h-1zM291 493h1v1h-1zM446 493h1v1h-1zM291 494h1v1h-1zM445 494h1v1h-1zM534 494h1v1h-1zM291 495h1v1h-1zM444 495h1v1h-1zM533 495h1v1h-1zM291 496h1v1h-1zM443 496h1v1h-1zM291 497h1v1h-1zM442 497h1v1h-1zM291 498h1v1h-1zM441 498h1v1h-1zM530 498h1v1h-1zM291 499h1v1h-1zM435 499h2v1h-2zM440 499h1v1h-1zM529 499h1v1h-1zM291 500h1v1h-1zM435 500h1v1h-1zM437 500h1v1h-1zM439 500h1v1h-1zM291 501h1v1h-1zM434 501h1v1h-1zM438 501h1v1h-1zM291 502h1v1h-1zM434 502h1v1h-1zM439 502h1v1h-1zM526 502h1v1h-1zM291 503h1v1h-1zM433 503h1v1h-1zM439 503h1v1h-1zM525 503h1v1h-1zM291 504h1v1h-1zM432 504h1v1h-1zM438 504h1v1h-1zM291 505h1v1h-1zM432 505h1v1h-1zM436 505h2v1h-2zM291 506h1v1h-1zM431 506h1v1h-1zM435 506h1v1h-1zM522 506h1v1h-1zM291 507h1v1h-1zM430 507h1v1h-1zM433 507h2v1h-2zM521 507h1v1h-1zM291 508h1v1h-1zM430 508h1v1h-1zM432 508h1v1h-1zM291 509h1v1h-1zM429 509h3v1h-3zM291 510h1v1h-1zM428 510h2v1h-2zM518 510h1v1h-1zM291 511h1v1h-1zM428 511h1v1h-1zM517 511h1v1h-1zM291 512h1v1h-1zM291 513h1v1h-1zM291 514h1v1h-1zM514 514h1v1h-1zM291 515h1v1h-1zM509 515h1v1h-1zM513 515h1v1h-1zM291 516h1v1h-1zM508 516h1v1h-1zM510 516h1v1h-1zM291 517h1v1h-1zM507 517h1v1h-1zM511 517h1v1h-1zM291 518h1v1h-1zM507 518h1v1h-1zM512 518h1v1h-1zM291 519h1v1h-1zM506 519h1v1h-1zM512 519h1v1h-1zM291 520h1v1h-1zM505 520h1v1h-1zM510 520h2v1h-2zM291 521h1v1h-1zM505 521h1v1h-1zM509 521h1v1h-1zM291 522h1v1h-1zM504 522h1v1h-1zM507 522h2v1h-2zM291 523h1v1h-1zM503 523h1v1h-1zM506 523h1v1h-1zM291 524h1v1h-1zM503 524h3v1h-3zM291 525h1v1h-1zM502 525h2v1h-2zM291 526h1v1h-1zM501 526h2v1h-2zM291 527h1v1h-1zM501 527h1v1h-1zM291 528h1v1h-1zM289 529h6v1h-6zM289 530h1v1h-1zM293 534h1v1h-1zM293 535h1v1h-1zM293 536h1v1h-1zM293 537h1v1h-1zM292 538h1v1h-1zM292 539h1v1h-1zM292 540h1v1h-1zM291 541h1v1h-1zM291 542h1v1h-1zM284 543h43v1h-43zM353 555h1v1h-1zM382 555h1v1h-1zM448 555h1v1h-1zM477 555h1v1h-1zM353 556h1v1h-1zM382 556h1v1h-1zM448 556h1v1h-1zM477 556h1v1h-1zM353 557h1v1h-1zM382 557h1v1h-1zM448 557h1v1h-1zM477 557h1v1h-1zM353 558h1v1h-1zM382 558h1v1h-1zM448 558h1v1h-1zM477 558h1v1h-1zM353 559h1v1h-1zM382 559h1v1h-1zM448 559h1v1h-1zM477 559h1v1h-1zM353 560h1v1h-1zM382 560h1v1h-1zM448 560h1v1h-1zM477 560h1v1h-1zM353 561h1v1h-1zM382 561h1v1h-1zM448 561h1v1h-1zM477 561h1v1h-1zM353 562h1v1h-1zM382 562h1v1h-1zM448 562h1v1h-1zM477 562h1v1h-1zM353 563h1v1h-1zM382 563h1v1h-1zM448 563h1v1h-1zM477 563h1v1h-1zM353 564h1v1h-1zM382 564h1v1h-1zM448 564h1v1h-1zM477 564h1v1h-1zM353 565h1v1h-1zM382 565h1v1h-1zM448 565h1v1h-1zM477 565h1v1h-1zM353 566h1v1h-1zM382 566h1v1h-1zM448 566h1v1h-1zM477 566h1v1h-1zM353 567h1v1h-1zM382 567h1v1h-1zM448 567h1v1h-1zM477 567h1v1h-1zM353 568h1v1h-1zM382 568h1v1h-1zM448 568h1v1h-1zM477 568h1v1h-1zM353 569h1v1h-1zM382 569h1v1h-1zM448 569h1v1h-1zM477 569h1v1h-1zM353 570h1v1h-1zM382 570h1v1h-1zM448 570h1v1h-1zM477 570h1v1h-1zM353 571h1v1h-1zM382 571h1v1h-1zM448 571h1v1h-1zM477 571h1v1h-1zM353 572h1v1h-1zM382 572h1v1h-1zM448 572h1v1h-1zM477 572h1v1h-1zM353 573h1v1h-1zM382 573h1v1h-1zM448 573h1v1h-1zM477 573h1v1h-1zM353 574h1v1h-1zM382 574h1v1h-1zM448 574h1v1h-1zM477 574h1v1h-1zM353 575h1v1h-1zM382 575h1v1h-1zM448 575h1v1h-1zM477 575h1v1h-1zM353 576h1v1h-1zM382 576h1v1h-1zM448 576h1v1h-1zM477 576h1v1h-1zM353 577h1v1h-1zM382 577h1v1h-1zM448 577h1v1h-1zM477 577h1v1h-1zM353 578h1v1h-1zM382 578h1v1h-1zM448 578h1v1h-1zM477 578h1v1h-1zM353 579h1v1h-1zM382 579h1v1h-1zM448 579h1v1h-1zM477 579h1v1h-1zM353 580h1v1h-1zM382 580h1v1h-1zM448 580h1v1h-1zM477 580h1v1h-1zM353 581h1v1h-1zM382 581h1v1h-1zM448 581h1v1h-1zM477 581h1v1h-1zM353 582h1v1h-1zM382 582h1v1h-1zM448 582h1v1h-1zM477 582h1v1h-1zM353 583h1v1h-1zM382 583h1v1h-1zM448 583h1v1h-1zM477 583h1v1h-1zM353 584h1v1h-1zM382 584h1v1h-1zM448 584h1v1h-1zM477 584h1v1h-1zM353 585h1v1h-1zM382 585h1v1h-1zM448 585h1v1h-1zM477 585h1v1h-1zM339 586h5v1h-5zM353 586h1v1h-1zM382 586h1v1h-1zM392 586h5v1h-5zM434 586h5v1h-5zM448 586h1v1h-1zM477 586h1v1h-1zM487 586h5v1h-5zM339 587h1v1h-1zM344 587h4v1h-4zM353 587h1v1h-1zM382 587h1v1h-1zM388 587h4v1h-4zM396 587h1v1h-1zM434 587h1v1h-1zM439 587h4v1h-4zM448 587h1v1h-1zM477 587h1v1h-1zM483 587h4v1h-4zM491 587h1v1h-1zM339 588h1v1h-1zM348 588h4v1h-4zM353 588h1v1h-1zM382 588h1v1h-1zM384 588h4v1h-4zM396 588h1v1h-1zM434 588h1v1h-1zM443 588h4v1h-4zM448 588h1v1h-1zM477 588h1v1h-1zM479 588h4v1h-4zM491 588h1v1h-1zM318 589h22v1h-22zM348 589h40v1h-40zM396 589h39v1h-39zM443 589h40v1h-40zM491 589h24v1h-24zM339 590h1v1h-1zM344 590h4v1h-4zM353 590h1v1h-1zM382 590h1v1h-1zM388 590h4v1h-4zM396 590h1v1h-1zM434 590h1v1h-1zM439 590h4v1h-4zM448 590h1v1h-1zM477 590h1v1h-1zM483 590h4v1h-4zM491 590h1v1h-1zM339 591h5v1h-5zM353 591h1v1h-1zM382 591h1v1h-1zM392 591h5v1h-5zM434 591h5v1h-5zM448 591h1v1h-1zM477 591h1v1h-1zM487 591h5v1h-5zM339 592h1v1h-1zM353 592h1v1h-1zM382 592h1v1h-1zM396 592h1v1h-1zM434 592h1v1h-1zM448 592h1v1h-1zM477 592h1v1h-1zM491 592h1v1h-1zM353 593h1v1h-1zM382 593h1v1h-1zM448 593h1v1h-1zM477 593h1v1h-1zM353 594h1v1h-1zM382 594h1v1h-1zM448 594h1v1h-1zM477 594h1v1h-1zM353 595h1v1h-1zM382 595h1v1h-1zM448 595h1v1h-1zM477 595h1v1h-1zM353 596h1v1h-1zM382 596h1v1h-1zM448 596h1v1h-1zM477 596h1v1h-1z"/><path fill="#000080" d="M290 192h1v1h-1zM290 193h1v1h-1zM290 194h1v1h-1zM290 195h1v1h-1zM290 196h1v1h-1zM290 197h1v1h-1zM290 198h1v1h-1zM290 199h1v1h-1zM294 199h1v1h-1zM290 200h1v1h-1zM294 200h1v1h-1zM294 201h1v1h-1zM294 202h1v1h-1zM294 203h1v1h-1zM407 324h1v1h-1zM407 325h1v1h-1zM407 326h1v1h-1zM407 327h1v1h-1zM407 328h1v1h-1zM407 329h1v1h-1zM407 330h1v1h-1zM407 332h1v1h-1zM407 333h1v1h-1zM407 334h1v1h-1zM407 335h1v1h-1zM407 336h1v1h-1zM407 337h1v1h-1zM407 338h1v1h-1zM407 339h1v1h-1zM407 340h1v1h-1zM407 341h1v1h-1zM407 342h1v1h-1zM407 343h1v1h-1zM407 344h1v1h-1zM407 345h1v1h-1zM407 346h1v1h-1zM407 347h1v1h-1zM407 348h1v1h-1zM407 349h1v1h-1zM407 350h1v1h-1zM407 351h1v1h-1zM407 352h1v1h-1zM407 353h1v1h-1zM407 354h1v1h-1zM407 355h1v1h-1zM407 356h1v1h-1zM407 357h1v1h-1zM407 358h1v1h-1zM407 359h1v1h-1zM407 360h1v1h-1zM407 361h1v1h-1zM407 362h1v1h-1zM407 363h1v1h-1zM407 364h1v1h-1zM407 365h1v1h-1zM407 366h1v1h-1zM550 478h1v1h-1zM547 480h1v1h-1zM547 481h1v1h-1zM543 484h1v1h-1zM543 485h1v1h-1zM539 488h1v1h-1zM539 489h1v1h-1zM535 492h1v1h-1zM535 493h1v1h-1zM531 496h1v1h-1zM531 497h1v1h-1zM527 500h1v1h-1zM527 501h1v1h-1zM523 504h1v1h-1zM523 505h1v1h-1zM519 508h1v1h-1zM519 509h1v1h-1zM515 512h1v1h-1zM515 513h1v1h-1zM511 516h1v1h-1zM294 530h1v1h-1zM290 531h1v1h-1zM294 531h1v1h-1zM290 532h1v1h-1zM294 532h1v1h-1zM290 533h1v1h-1zM294 533h1v1h-1zM290 534h1v1h-1zM290 535h1v1h-1zM290 536h1v1h-1zM290 537h1v1h-1zM290 538h1v1h-1zM290 539h1v1h-1zM290 540h1v1h-1z"/><path fill="#ff0000" d="M382 180h1v1h-1zM353 187h1v1h-1zM477 187h1v1h-1zM353 188h1v1h-1zM477 188h1v1h-1zM382 191h1v1h-1zM382 192h1v1h-1zM353 199h1v1h-1zM477 199h1v1h-1zM353 200h1v1h-1zM477 200h1v1h-1zM353 201h1v1h-1zM477 201h1v1h-1zM353 202h1v1h-1zM477 202h1v1h-1zM353 203h1v1h-1zM382 203h1v1h-1zM477 203h1v1h-1zM353 204h1v1h-1zM382 204h1v1h-1zM477 204h1v1h-1zM353 205h1v1h-1zM382 205h1v1h-1zM477 205h1v1h-1zM353 206h1v1h-1zM382 206h1v1h-1zM477 206h1v1h-1zM353 207h1v1h-1zM382 207h1v1h-1zM477 207h1v1h-1zM353 208h1v1h-1zM382 208h1v1h-1zM477 208h1v1h-1zM353 209h1v1h-1zM382 209h1v1h-1zM477 209h1v1h-1zM353 210h1v1h-1zM382 210h1v1h-1zM477 210h1v1h-1zM353 211h1v1h-1zM382 211h1v1h-1zM477 211h1v1h-1zM353 212h1v1h-1zM382 212h1v1h-1zM477 212h1v1h-1zM353 213h1v1h-1zM382 213h1v1h-1zM477 213h1v1h-1zM353 214h1v1h-1zM382 214h1v1h-1zM477 214h1v1h-1zM353 215h1v1h-1zM382 215h1v1h-1zM477 215h1v1h-1zM353 216h1v1h-1zM382 216h1v1h-1zM477 216h1v1h-1zM353 217h1v1h-1zM382 217h1v1h-1zM477 217h1v1h-1zM353 218h1v1h-1zM382 218h1v1h-1zM477 218h1v1h-1zM353 219h1v1h-1zM382 219h1v1h-1zM477 219h1v1h-1zM353 220h1v1h-1zM382 220h1v1h-1zM477 220h1v1h-1zM353 221h1v1h-1zM382 221h1v1h-1zM477 221h1v1h-1zM382 222h1v1h-1zM382 223h1v1h-1zM382 224h1v1h-1zM382 225h1v1h-1zM382 507h1v1h-1zM382 508h1v1h-1zM382 509h1v1h-1zM382 510h1v1h-1zM353 511h1v1h-1zM382 511h1v1h-1zM477 511h1v1h-1zM353 512h1v1h-1zM382 512h1v1h-1zM477 512h1v1h-1zM353 513h1v1h-1zM382 513h1v1h-1zM477 513h1v1h-1zM353 514h1v1h-1zM382 514h1v1h-1zM477 514h1v1h-1zM353 515h1v1h-1zM382 515h1v1h-1zM477 515h1v1h-1zM353 516h1v1h-1zM382 516h1v1h-1zM477 516h1v1h-1zM353 517h1v1h-1zM382 517h1v1h-1zM477 517h1v1h-1zM353 518h1v1h-1zM382 518h1v1h-1zM477 518h1v1h-1zM353 519h1v1h-1zM382 519h1v1h-1zM477 519h1v1h-1zM353 520h1v1h-1zM382 520h1v1h-1zM477 520h1v1h-1zM353 521h1v1h-1zM382 521h1v1h-1zM477 521h1v1h-1zM353 522h1v1h-1zM382 522h1v1h-1zM477 522h1v1h-1zM353 523h1v1h-1zM382 523h1v1h-1zM477 523h1v1h-1zM353 524h1v1h-1zM382 524h1v1h-1zM477 524h1v1h-1zM353 525h1v1h-1zM382 525h1v1h-1zM477 525h1v1h-1zM353 526h1v1h-1zM382 526h1v1h-1zM477 526h1v1h-1zM353 527h1v1h-1zM382 527h1v1h-1zM477 527h1v1h-1zM353 528h1v1h-1zM382 528h1v1h-1zM477 528h1v1h-1zM353 529h1v1h-1zM382 529h1v1h-1zM477 529h1v1h-1zM353 530h1v1h-1zM382 530h1v1h-1zM477 530h1v1h-1zM353 531h1v1h-1zM477 531h1v1h-1zM353 532h1v1h-1zM477 532h1v1h-1zM353 533h1v1h-1zM477 533h1v1h-1zM353 534h1v1h-1zM477 534h1v1h-1zM382 541h1v1h-1zM382 542h1v1h-1zM353 545h1v1h-1zM477 545h1v1h-1zM353 546h1v1h-1zM477 546h1v1h-1zM382 552h1v1h-1zM382 553h1v1h-1z"/><path fill="#c80000" d="M448 180h1v1h-1zM448 191h1v1h-1zM448 192h1v1h-1zM448 203h1v1h-1zM448 204h1v1h-1zM448 205h1v1h-1zM448 206h1v1h-1zM448 207h1v1h-1zM448 208h1v1h-1zM448 209h1v1h-1zM448 210h1v1h-1zM448 211h1v1h-1zM448 212h1v1h-1zM448 213h1v1h-1zM448 214h1v1h-1zM448 215h1v1h-1zM448 216h1v1h-1zM448 217h1v1h-1zM448 218h1v1h-1zM448 219h1v1h-1zM448 220h1v1h-1zM448 221h1v1h-1zM448 222h1v1h-1zM448 223h1v1h-1zM448 224h1v1h-1zM448 225h1v1h-1zM448 507h1v1h-1zM448 508h1v1h-1zM448 509h1v1h-1zM448 510h1v1h-1zM448 511h1v1h-1zM448 512h1v1h-1zM448 513h1v1h-1zM448 514h1v1h-1zM448 515h1v1h-1zM448 516h1v1h-1zM448 517h1v1h-1zM448 518h1v1h-1zM448 519h1v1h-1zM448 520h1v1h-1zM448 521h1v1h-1zM448 522h1v1h-1zM448 523h1v1h-1zM448 524h1v1h-1zM448 525h1v1h-1zM448 526h1v1h-1zM448 527h1v1h-1zM448 528h1v1h-1zM448 529h1v1h-1zM448 530h1v1h-1zM448 541h1v1h-1zM448 542h1v1h-1zM448 552h1v1h-1zM448 553h1v1h-1z"/></svg>
</body></html>
